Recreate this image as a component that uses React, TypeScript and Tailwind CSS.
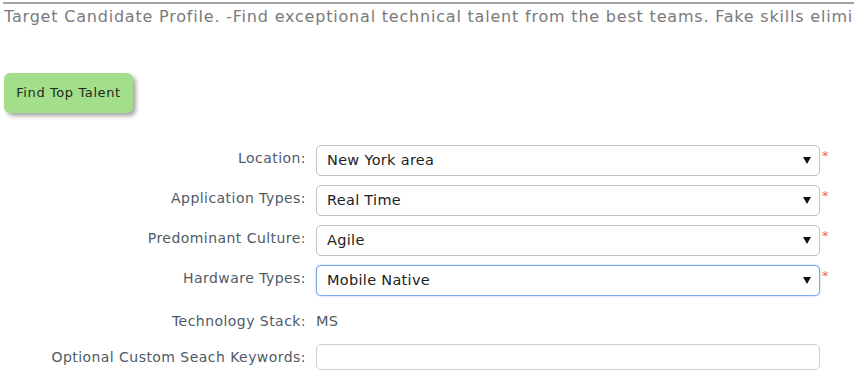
import React from 'react';

const fieldRows = [
  { label: 'Location:', value: 'New York area' },
  { label: 'Application Types:', value: 'Real Time' },
  { label: 'Predominant Culture:', value: 'Agile' },
  { label: 'Hardware Types:', value: 'Mobile Native', focused: true },
];

const Caret = () => (
  <svg width="8" height="7" viewBox="0 0 8 7" className="shrink-0">
    <path d="M0 0 H8 L4 7 Z" fill="#111" />
  </svg>
);

export default function App() {
  return (
    <div className="h-[392px] w-[854px] overflow-hidden bg-white font-['DejaVu_Sans',Verdana,sans-serif]">
      <div className="ml-[3px] mt-[2px] border-t-2 border-[#a3a3a3]" />
      <p className="ml-[4px] mt-[3px] whitespace-nowrap text-[16px] leading-[20px] tracking-[0.8px] text-[#7a7a7a]">
        Target Candidate Profile. -Find exceptional technical talent from the best teams. Fake skills eliminated.
      </p>

      <button className="ml-[4px] mt-[46px] flex h-[40px] w-[129px] items-center justify-center rounded-[6px] bg-[#a3de8b] text-[13px] tracking-[0.6px] text-[#1e2a1e] shadow-[3px_3px_4px_rgba(0,0,0,0.35)]">
        Find Top Talent
      </button>

      {/* form */}
      <div className="mt-[32px] grid grid-cols-[306px_504px_20px] items-center gap-x-[10px] gap-y-[9px]">
        {fieldRows.map((r) => (
          <React.Fragment key={r.label}>
            <div className="pb-[6px] text-right text-[14px] leading-[18px] tracking-[0.45px] text-[#4f5a66]">{r.label}</div>
            <div
              className={
                'flex h-[31px] items-center justify-between rounded-[5px] border bg-white pl-[10px] pr-[8px] text-[14.5px] tracking-[0.3px] text-[#222] ' +
                (r.focused
                  ? 'border-[#7aa6ea] shadow-[0_0_2px_rgba(80,140,230,0.6)]'
                  : 'border-[#c4c4c4]')
              }
            >
              <span className="pt-[1px]">{r.value}</span>
              <Caret />
            </div>
            <div className="-ml-[8px] self-start pt-[4px] text-[13px] leading-[13px] text-[#ff5a5a]">*</div>
          </React.Fragment>
        ))}

        <div className="mt-[7px] text-right text-[14px] leading-[18px] tracking-[0.45px] text-[#4f5a66]">Technology Stack:</div>
        <div className="mt-[7px] text-[14.5px] leading-[18px] tracking-[0.3px] text-[#4f5a66]">MS</div>
        <div />

        <div className="mt-[5px] text-right text-[14px] leading-[18px] tracking-[0.45px] text-[#4f5a66]">Optional Custom Seach Keywords:</div>
        <div className="mt-[5px] h-[26px] rounded-[5px] border border-[#cfcfcf] bg-white" />
        <div />
      </div>
    </div>
  );
}
